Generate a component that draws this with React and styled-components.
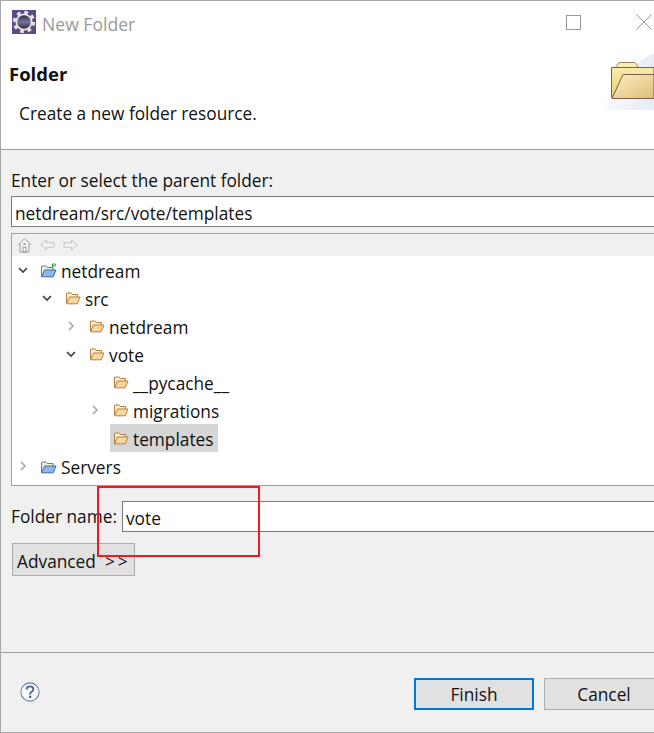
import React from 'react'
import styled, { createGlobalStyle } from 'styled-components'

const GlobalStyle = createGlobalStyle`
   html, body {
      margin: 0;
      padding: 0;
      background: #fff;
   }
   * {
      box-sizing: border-box;
   }
`

const TREE = [
   { name: 'netdream', depth: 0, arrow: 'open', kind: 'project' },
   { name: 'src', depth: 1, arrow: 'open' },
   { name: 'netdream', depth: 2, arrow: 'closed' },
   { name: 'vote', depth: 2, arrow: 'open' },
   { name: '__pycache__', depth: 3 },
   { name: 'migrations', depth: 3, arrow: 'closed' },
   { name: 'templates', depth: 3, selected: true },
   { name: 'Servers', depth: 0, arrow: 'closed', kind: 'project-plain' },
]

const AppIcon = () => (
   <svg width="24" height="24" viewBox="0 0 24 24">
      <defs>
         <linearGradient id="appCore" x1="0" y1="0" x2="0" y2="1">
            <stop offset="0" stopColor="#2f2b48" />
            <stop offset="0.5" stopColor="#77749a" />
            <stop offset="1" stopColor="#2f2b48" />
         </linearGradient>
      </defs>
      <rect width="24" height="24" fill="#5d4a86" />
      <circle cx="12" cy="12" r="9.6" fill="none" stroke="#e2e2e2" strokeWidth="3.2" strokeDasharray="3.7 3.84" />
      <circle cx="12" cy="12" r="8.6" fill="#e6e6e6" />
      <circle cx="12" cy="12" r="6.8" fill="url(#appCore)" />
   </svg>
)

const WizardFolder = () => (
   <svg width="50" height="60" viewBox="0 0 50 60">
      <defs>
         <linearGradient id="wizBack" x1="0" y1="0" x2="0" y2="1">
            <stop offset="0" stopColor="#f8eca8" />
            <stop offset="1" stopColor="#e8cd78" />
         </linearGradient>
         <linearGradient id="wizFront" x1="0" y1="0" x2="1" y2="1">
            <stop offset="0" stopColor="#fdf0c4" />
            <stop offset="1" stopColor="#dcbd78" />
         </linearGradient>
         <linearGradient id="wizBg" x1="0" y1="0" x2="1" y2="0">
            <stop offset="0" stopColor="#fbfbfe" />
            <stop offset="1" stopColor="#e6ebf7" />
         </linearGradient>
      </defs>
      <path d="M0 60 C6 36 26 14 50 3 V60 Z" fill="url(#wizBg)" />
      <path d="M11 18 L15 12.5 H31 L35 18 Z" fill="#f8eeb0" stroke="#9c8666" />
      <path d="M7.5 17.5 H50 V48.5 H9.5 Q7.5 48.5 7.5 46.5 Z" fill="url(#wizBack)" stroke="#7d5f52" />
      <path d="M8 48.5 L19 24.5 H50 V48.5 Z" fill="url(#wizFront)" stroke="#7d5f52" />
   </svg>
)

const HomeIcon = () => (
   <svg width="15" height="16" viewBox="0 0 15 16">
      <path d="M1 8 L7.5 1.5 L14 8 M3 7 V15 H12 V7" fill="#f4f4f4" stroke="#9a9a9a" />
      <rect x="6" y="10" width="3" height="5" fill="none" stroke="#9a9a9a" />
      <rect x="6.5" y="6" width="2" height="2" fill="#9a9a9a" />
   </svg>
)

const ArrowIcon = ({ flip }) => (
   <svg width="15" height="12" viewBox="0 0 15 12" style={flip ? { transform: 'scaleX(-1)' } : undefined}>
      <path d="M1 6 L6.5 1 V3.8 H14 V8.2 H6.5 V11 Z" fill="#f2f2f2" stroke="#c4c4c4" />
   </svg>
)

const Chevron = ({ state }) =>
   state === 'open' ? (
      <svg width="10" height="7" viewBox="0 0 10 7">
         <path d="M1 1 L5 5 L9 1" fill="none" stroke="#444" strokeWidth="1.7" />
      </svg>
   ) : (
      <svg width="7" height="10" viewBox="0 0 7 10">
         <path d="M1 1 L5 5 L1 9" fill="none" stroke="#a8a8a8" strokeWidth="1.7" />
      </svg>
   )

const FolderIcon = () => (
   <svg width="16" height="13" viewBox="0 0 16 13">
      <path d="M1.5 11.5 V2 Q1.5 1 2.5 1 H6 L7.5 2.5 H12.5 V5" fill="#fbeccb" stroke="#b97f3a" />
      <path d="M1.5 11.8 L4.5 5 H15 L12.2 11.8 Z" fill="#f6d9a2" stroke="#b97f3a" />
   </svg>
)

const ProjectIcon = ({ nature }) => (
   <svg width="17" height="15" viewBox="0 0 17 15">
      <path d="M1.5 13.5 V4 Q1.5 3 2.5 3 H6 L7.5 4.5 H13 V7" fill="#f6eed4" stroke="#6f7890" />
      <path d="M1.5 13.8 L4.5 7 H16 L13.2 13.8 Z" fill="#8db9ea" stroke="#3b6cab" />
      {nature && <path d="M12.5 5 V1 H14.8 Q15.8 1 15.8 2 Q15.8 3 14.8 3 H12.5" fill="none" stroke="#2aa52a" strokeWidth="1" />}
   </svg>
)

const HelpIcon = () => (
   <svg width="20" height="20" viewBox="0 0 21 21">
      <circle cx="10.5" cy="10.5" r="9.6" fill="#f6f7fa" stroke="#6f7f9f" strokeWidth="1.1" />
      <path d="M7 8 Q7 4.6 10.5 4.6 Q14 4.6 14 7.6 Q14 9.2 12.2 10.2 Q10.6 11.1 10.6 13" fill="none" stroke="#4f638c" strokeWidth="2" />
      <rect x="9.4" y="14.4" width="2.4" height="2.4" fill="#4f638c" />
   </svg>
)

const App = () => {
   return (
      <Dialog>
         <GlobalStyle />
         <TitleBar>
            <AppIcon />
            <TitleText>New Folder</TitleText>
            <MaxButton />
            <CloseButton>
               <svg width="16" height="16" viewBox="0 0 16 16">
                  <path d="M0.5 0.5 L15.5 15.5 M15.5 0.5 L0.5 15.5" stroke="#999" strokeWidth="1" />
               </svg>
            </CloseButton>
         </TitleBar>

         <Header>
            <div>
               <HeaderTitle>Folder</HeaderTitle>
               <HeaderMessage>Create a new folder resource.</HeaderMessage>
            </div>
            <HeaderImage>
               <WizardFolder />
            </HeaderImage>
         </Header>

         <Body>
            <FieldLabel>Enter or select the parent folder:</FieldLabel>
            <TextBox>netdream/src/vote/templates</TextBox>
            <TreePanel>
               <TreeToolbar>
                  <HomeIcon />
                  <ArrowIcon />
                  <ArrowIcon flip />
               </TreeToolbar>
               <TreeList>
                  {TREE.map((item, i) => (
                     <TreeRow key={i} $depth={item.depth}>
                        <Twisty>{item.arrow && <Chevron state={item.arrow} />}</Twisty>
                        <TreeItem $selected={item.selected} $project={!!item.kind}>
                           {item.kind ? <ProjectIcon nature={item.kind === 'project'} /> : <FolderIcon />}
                           <span>{item.name}</span>
                        </TreeItem>
                     </TreeRow>
                  ))}
               </TreeList>
            </TreePanel>
            <NameRow>
               <span>Folder name:</span>
               <NameBox>vote</NameBox>
            </NameRow>
            <AdvancedButton>
               Advanced<Arrows>&gt;&gt;</Arrows>
            </AdvancedButton>
         </Body>

         <Footer>
            <HelpIcon />
            <FooterButtons>
               <DialogButton $primary>Finish</DialogButton>
               <DialogButton>Cancel</DialogButton>
            </FooterButtons>
         </Footer>

         <RedMark />
      </Dialog>
   )
}

const Dialog = styled.div`
   position: relative;
   width: 654px;
   height: 733px;
   overflow: hidden;
   display: flex;
   flex-direction: column;
   background: #fff;
   border-top: 1px solid #a8a8a8;
   border-left: 1px solid #a8a8a8;
   border-bottom: 1px solid #a8a8a8;
   font-family: "Open Sans", "Noto Sans", sans-serif;
   font-size: 17.3px;
   color: #111;
`

const TitleBar = styled.div`
   height: 47px;
   flex: none;
   display: flex;
   align-items: center;
   padding: 0 0 1px 11px;
   gap: 6px;
   & > svg {
      margin-top: -5px;
   }
`

const TitleText = styled.div`
   flex: 1;
   color: #9a9a9a;
   font-size: 17.6px;
`

const MaxButton = styled.div`
   width: 15px;
   height: 15px;
   margin: -4px 49px 0 0;
   border: 1px solid #999;
`

const CloseButton = styled.div`
   width: 16px;
   height: 16px;
   margin: -4px 2px 0 0;
   display: flex;
   & > svg {
      display: block;
   }
`

const Header = styled.div`
   height: 102px;
   flex: none;
   display: flex;
   justify-content: space-between;
   border-bottom: 1px solid #a0a0a0;
   padding: 14px 0 0 8px;
`

const HeaderTitle = styled.div`
   font-weight: 700;
   font-size: 18.5px;
   line-height: 24px;
`

const HeaderMessage = styled.div`
   margin: 16px 0 0 10px;
   line-height: 24px;
`

const HeaderImage = styled.div`
   margin-top: -12px;
   & > svg {
      display: block;
   }
`

const Body = styled.div`
   flex: 1;
   background: #f0f0f0;
   padding: 19px 0 0 10px;
   display: flex;
   flex-direction: column;
`

const FieldLabel = styled.div`
   line-height: 24px;
   height: 27px;
`

const TextBox = styled.div`
   height: 31px;
   margin-right: -10px;
   background: #fff;
   border: 1px solid #7a7a7a;
   padding-left: 3px;
   line-height: 33px;
`

const TreePanel = styled.div`
   margin: 6px -10px 0 0;
   height: 253px;
   background: #fff;
   border: 1px solid #a0a0a0;
   display: flex;
   flex-direction: column;
`

const TreeToolbar = styled.div`
   height: 22px;
   flex: none;
   background: #f0f0f0;
   display: flex;
   align-items: center;
   gap: 8px;
   padding-left: 5px;
`

const TreeList = styled.div`
   display: flex;
   flex-direction: column;
`

const TreeRow = styled.div`
   height: 28px;
   display: flex;
   align-items: center;
   padding-left: ${p => p.$depth * 24 + 5}px;
`

const Twisty = styled.div`
   width: 12px;
   height: 12px;
   margin-right: 9px;
   display: flex;
   align-items: center;
   justify-content: center;
`

const TreeItem = styled.div`
   height: 28px;
   display: flex;
   align-items: center;
   gap: ${p => (p.$project ? 4 : 4)}px;
   padding: 0 4px 0 ${p => (p.$project ? 2 : 3)}px;
   background: ${p => (p.$selected ? '#d6d6d6' : 'transparent')};
   & > span {
      position: relative;
      top: 1px;
   }
`

const NameRow = styled.div`
   margin-top: 15px;
   height: 31px;
   display: flex;
   align-items: center;
   gap: 5px;
`

const NameBox = styled.div`
   flex: 1;
   height: 31px;
   margin-right: -10px;
   background: #fff;
   border: 1px solid #7a7a7a;
   padding-left: 3px;
   line-height: 33px;
`

const AdvancedButton = styled.div`
   margin: 11px 0 0 1px;
   width: 123px;
   height: 33px;
   background: #e1e1e1;
   border: 1px solid #adadad;
   padding-left: 4px;
   line-height: 35px;
   white-space: nowrap;
`

const Arrows = styled.span`
   margin-left: 9px;
   letter-spacing: 3px;
`

const Footer = styled.div`
   height: 80px;
   flex: none;
   background: #f0f0f0;
   border-top: 1px solid #a0a0a0;
   display: flex;
   align-items: center;
   justify-content: space-between;
   padding: 0 0 0 19px;
   & > svg {
      margin-top: -1px;
   }
`

const FooterButtons = styled.div`
   display: flex;
   gap: 10px;
   margin-right: -10px;
   margin-top: 2px;
`

const DialogButton = styled.div`
   width: 120px;
   height: 32px;
   background: #e1e1e1;
   border: ${p => (p.$primary ? '2px solid #0078d7' : '1px solid #adadad')};
   display: flex;
   align-items: center;
   justify-content: center;
   padding-top: 2px;
`

const RedMark = styled.div`
   position: absolute;
   left: 96px;
   top: 485px;
   width: 163px;
   height: 71px;
   border: 2px solid #ed1c24;
`

export default App
